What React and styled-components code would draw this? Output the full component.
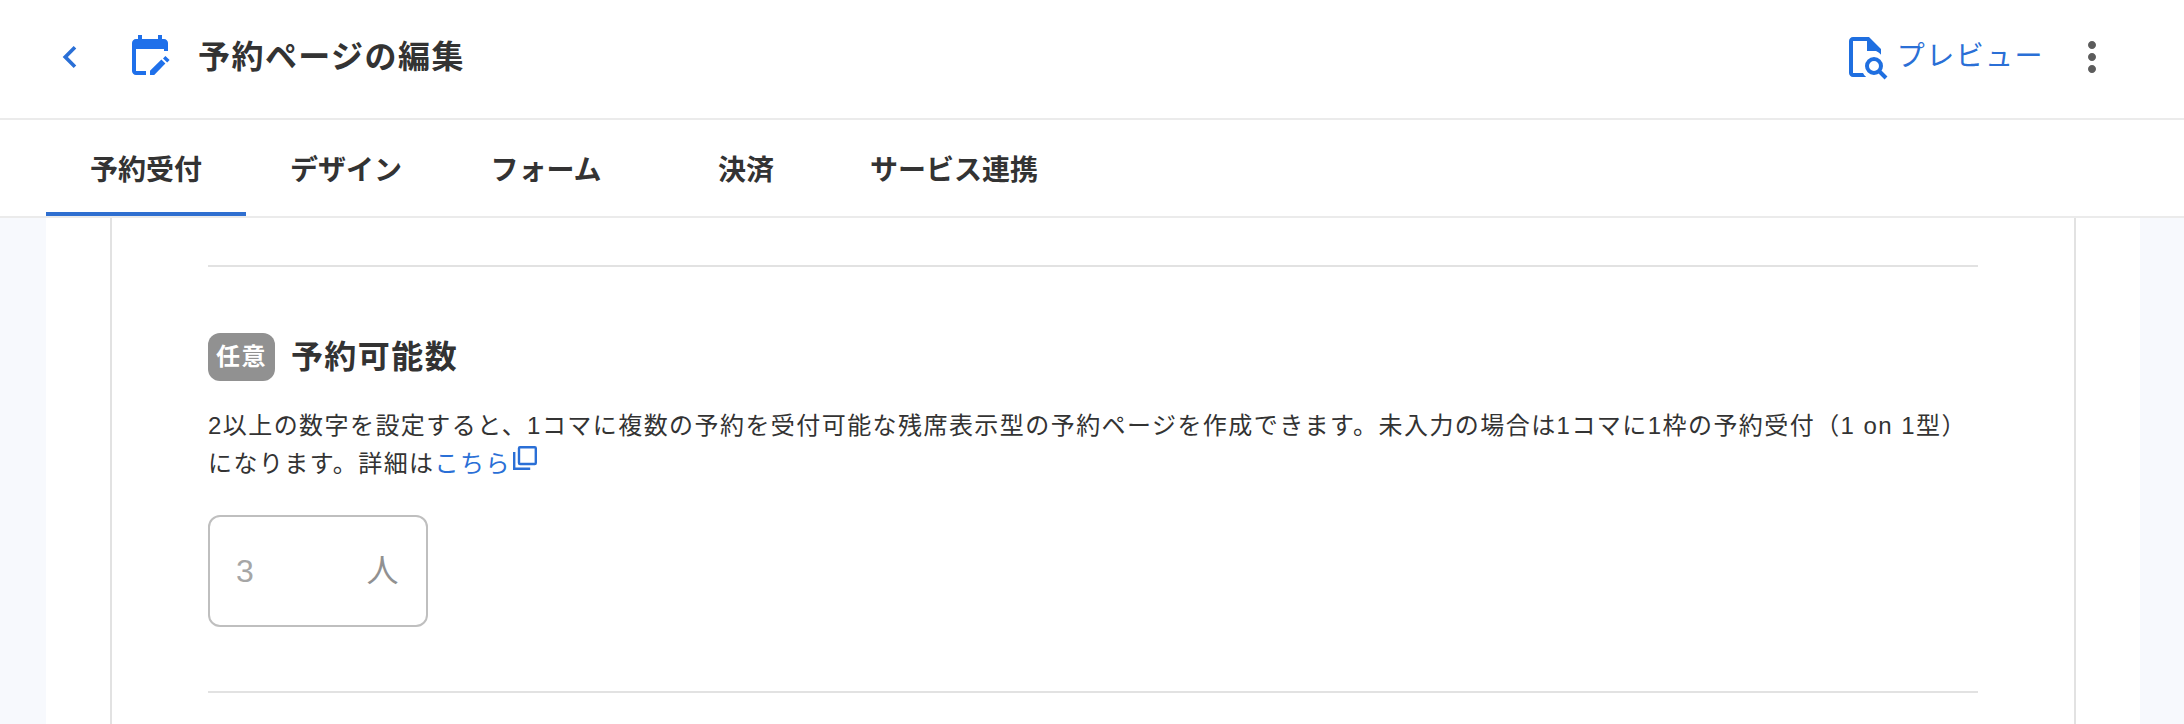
import React from 'react'
import styled, { createGlobalStyle } from 'styled-components'
import { MdChevronLeft, MdMoreVert } from 'react-icons/md'

const GlobalStyle = createGlobalStyle`
  * {
    box-sizing: border-box;
  }
  body {
    margin: 0;
    background-color: #f7f9fd;
    color: #333;
    font-family: "Liberation Sans", "Noto Sans CJK JP", sans-serif;
    font-size: 16px;
    letter-spacing: 0.09em;
  }
  button, input {
    font-family: inherit;
  }
`

const Page = styled.div`
  min-height: 100vh;
  display: flex;
  flex-direction: column;
`

const Header = styled.header`
  display: flex;
  align-items: center;
  height: 120px;
  padding: 0 68px 4px 48px;
  background-color: #fff;
  border-bottom: 2px solid #ebebeb;
`

const IconButton = styled.button`
  display: flex;
  padding: 0;
  border: none;
  background: none;
  color: ${(props) => props.$color};
  font-size: ${(props) => props.$size};
  cursor: pointer;
`

const Title = styled.h1`
  flex: 1;
  display: flex;
  align-items: center;
  gap: 24px;
  margin: 0 0 0 34px;
  font-size: 32px;
  line-height: 48px;
  font-weight: 600;
`

const PreviewLink = styled.a`
  display: flex;
  align-items: center;
  gap: 8px;
  margin-right: 24px;
  color: #2a6fd6;
  font-size: 28px;
  line-height: 48px;
  text-decoration: none;
`

const Tabs = styled.nav`
  display: flex;
  padding: 0 46px;
  background-color: #fff;
  border-bottom: 2px solid #ebebeb;
`

const Tab = styled.button`
  min-width: 200px;
  height: 96px;
  padding: 4px 24px 0;
  border: none;
  border-bottom: 4px solid ${(props) => (props.$active ? '#2f6fd0' : 'transparent')};
  background: none;
  color: #333;
  font-size: 28px;
  font-weight: 600;
  cursor: pointer;
`

const Main = styled.main`
  flex: 1;
  display: flex;
  margin: 0 44px 0 46px;
  padding: 0 64px;
  background-color: #fff;
`

const Panel = styled.div`
  flex: 1;
  padding: 47px 96px 0;
  border: solid #e2e2e2;
  border-width: 0 2px;
`

const Section = styled.section`
  padding: 64px 0;
  border: solid #e2e2e2;
  border-width: 2px 0;
`

const SectionHead = styled.div`
  display: flex;
  align-items: center;
  gap: 16px;
`

const Badge = styled.span`
  padding: 0 8px;
  border-radius: 12px;
  background-color: #919191;
  color: #fff;
  font-size: 24px;
  line-height: 48px;
  font-weight: 600;
`

const SectionTitle = styled.h2`
  margin: 0;
  font-size: 32px;
  line-height: 52px;
  font-weight: 600;
`

const Description = styled.p`
  margin: 24px 0 32px;
  font-size: 24px;
  line-height: 38px;
`

const DetailLink = styled.a`
  color: #2a6fd6;
  text-decoration: none;

  svg {
    margin-left: 2px;
    vertical-align: 2px;
  }
`

const Field = styled.label`
  display: flex;
  align-items: center;
  width: 220px;
  height: 112px;
  padding: 0 26px;
  border: 2px solid #bfbfbf;
  border-radius: 12px;
  color: #919191;
  font-size: 32px;
  line-height: 48px;
`

const NumberInput = styled.input`
  flex: 1;
  min-width: 0;
  padding: 0;
  border: none;
  outline: none;
  background: none;
  color: #333;
  font-size: 32px;

  &::placeholder {
    color: #a6a6a6;
    opacity: 1;
  }
`

const EditCalendarIcon = () => (
  <svg width="48" height="48" viewBox="0 1 24 24" fill="#1f70ea" aria-hidden="true">
    <path d="M10 22H5c-1.100 0-2-.9-2-2V6c0-1.100.9-2 2-2h1V2h2v2h8V2h2v2h1c1.100 0 2 .9 2 2v4h-2V9H5v11h5z" />
    <path d="M12 22v-2.100l5.700-5.600 2 2L14.100 22zM18.500 13.700l1.200-1.200 2.100 2-1.200 1.200z" />
  </svg>
)

const FindInPageIcon = () => (
  <svg width="48" height="48" viewBox="0 0 24 24" fill="#1f6fe0" aria-hidden="true">
    <path d="M14 2H6c-1.100 0-2 .9-2 2v16c0 1.100.9 2 2 2h6.600c-.7-.6-1.200-1.200-1.600-2H6V4h7v5h4.500c.9.400 1.800 1 2.500 1.900V8z" />
    <circle cx="16.500" cy="16.500" r="3.500" fill="none" stroke="#1f6fe0" strokeWidth="2" />
    <path d="M19 19l3.500 3.500" stroke="#1f6fe0" strokeWidth="2" />
  </svg>
)

const NewWindowIcon = () => (
  <svg width="24" height="24" viewBox="0 0 24 24" fill="none" stroke="#2a6fd6" strokeWidth="2.4" aria-hidden="true">
    <rect x="6" y="1.200" width="16.800" height="16.800" rx="1" />
    <path d="M1.200 6v16.800h16" />
  </svg>
)

const tabs = ['予約受付', 'デザイン', 'フォーム', '決済', 'サービス連携']

export default function App() {
  return (
    <Page>
      <GlobalStyle />
      <Header>
        <IconButton $color="#2a6fd6" $size="44px" aria-label="戻る">
          <MdChevronLeft />
        </IconButton>
        <Title>
          <EditCalendarIcon />
          予約ページの編集
        </Title>
        <PreviewLink href="#preview">
          <FindInPageIcon />
          プレビュー
        </PreviewLink>
        <IconButton $color="#5c5c5c" $size="48px" aria-label="メニュー">
          <MdMoreVert />
        </IconButton>
      </Header>
      <Tabs>
        {tabs.map((tab, i) => (
          <Tab key={tab} $active={i === 0}>{tab}</Tab>
        ))}
      </Tabs>
      <Main>
        <Panel>
          <Section>
            <SectionHead>
              <Badge>任意</Badge>
              <SectionTitle>予約可能数</SectionTitle>
            </SectionHead>
            <Description>
              2以上の数字を設定すると、1コマに複数の予約を受付可能な残席表示型の予約ページを作成できます。未入力の場合は1コマに1枠の予約受付（1 on 1型）になります。詳細は
              <DetailLink href="#detail">
                こちら
                <NewWindowIcon />
              </DetailLink>
            </Description>
            <Field>
              <NumberInput type="text" inputMode="numeric" placeholder="3" aria-label="予約可能数" />
              人
            </Field>
          </Section>
        </Panel>
      </Main>
    </Page>
  )
}
